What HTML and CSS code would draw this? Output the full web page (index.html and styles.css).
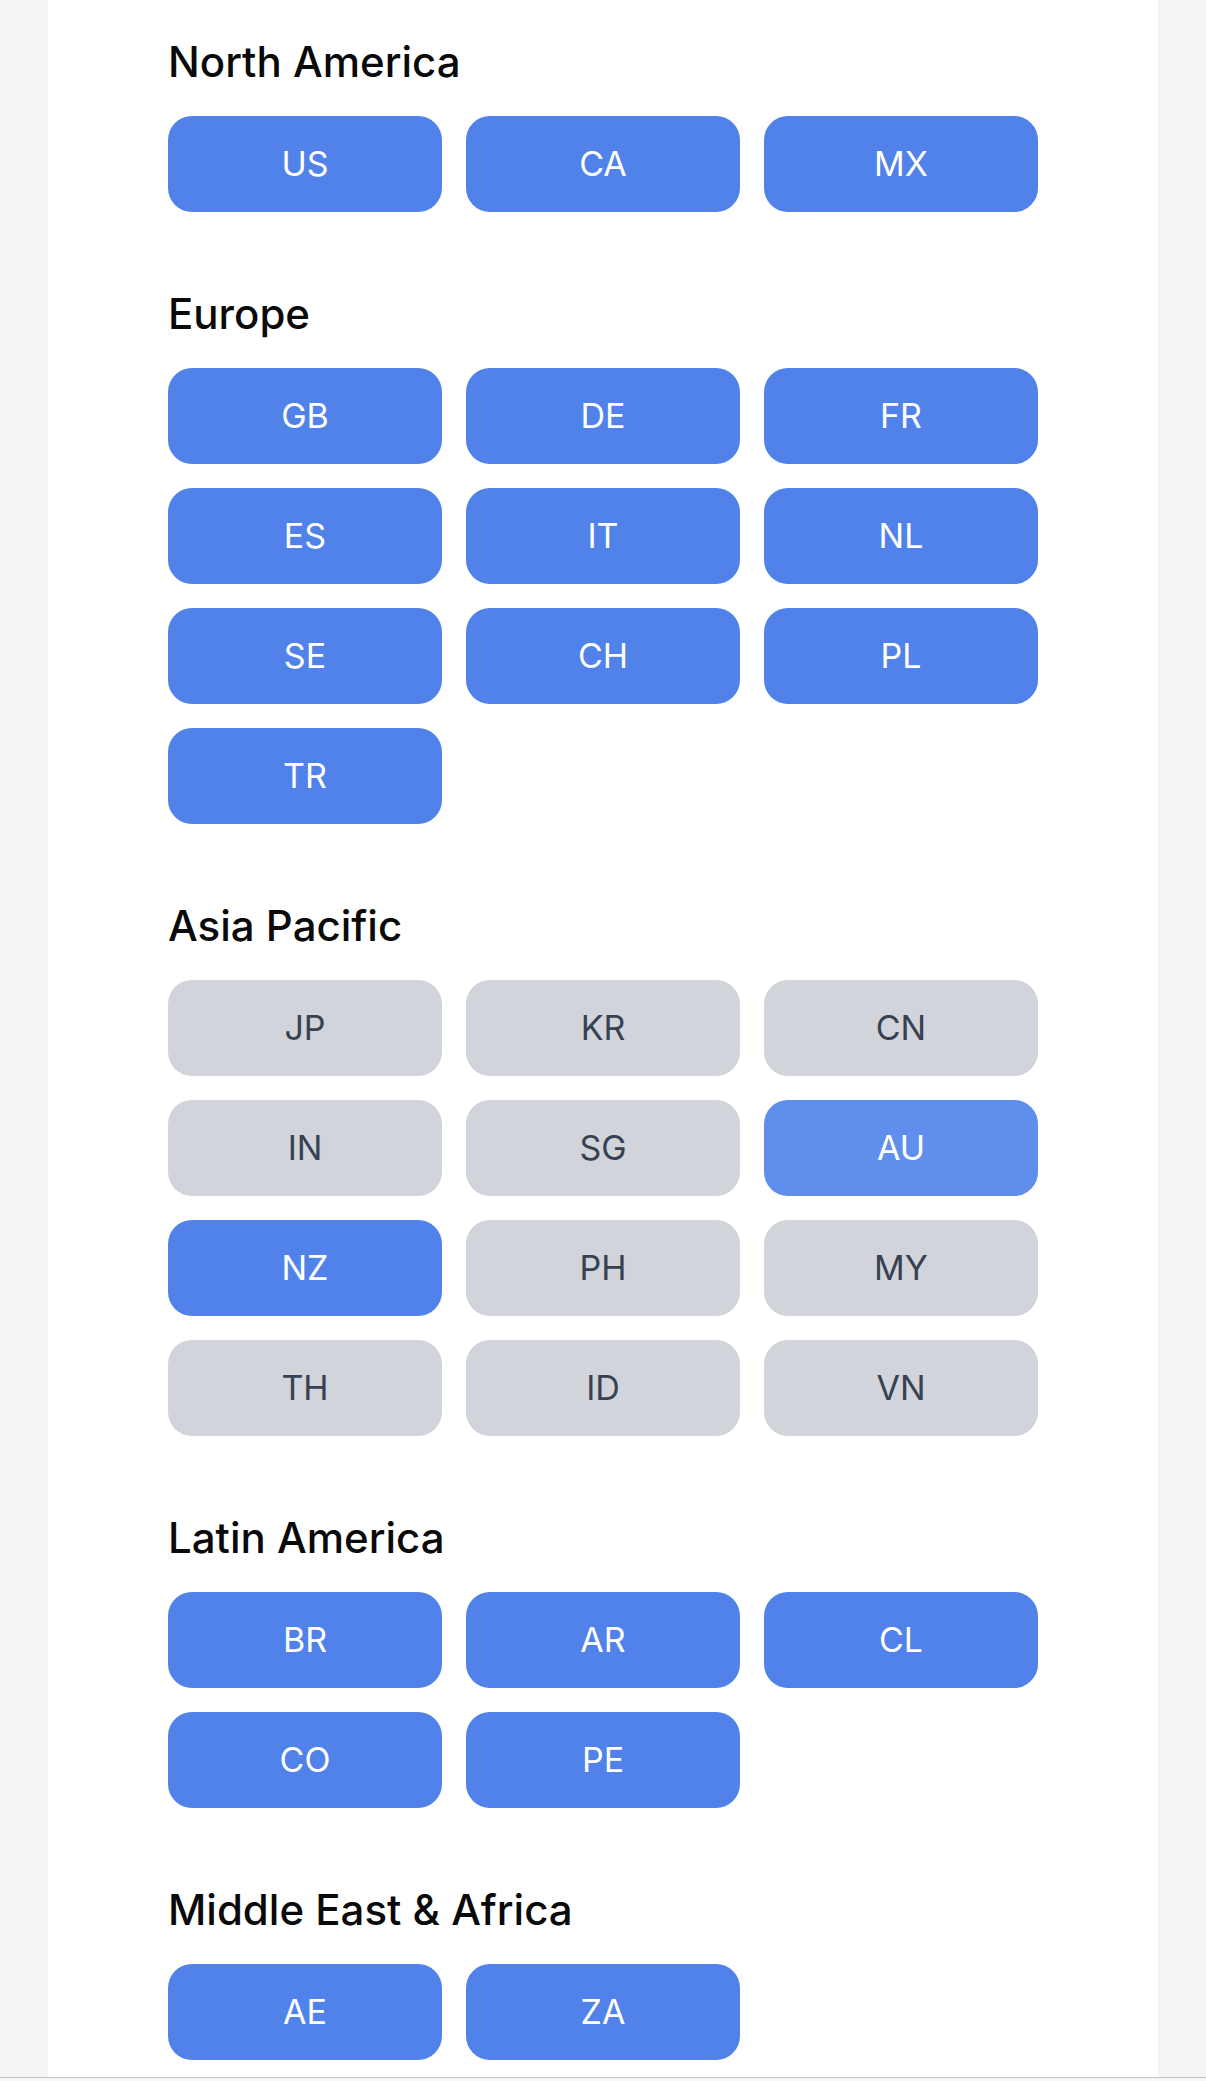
FILE: index.html
```html
<!DOCTYPE html>
<html lang="en">
<head>
<meta charset="utf-8">
<title>Regions</title>
<link rel="stylesheet" href="styles.css">
</head>
<body>
<main class="panel">
  <section class="region">
    <h2 class="region-title">North America</h2>
    <div class="chips">
      <button class="chip on">US</button>
      <button class="chip on">CA</button>
      <button class="chip on">MX</button>
    </div>
  </section>
  <section class="region">
    <h2 class="region-title">Europe</h2>
    <div class="chips">
      <button class="chip on">GB</button>
      <button class="chip on">DE</button>
      <button class="chip on">FR</button>
      <button class="chip on">ES</button>
      <button class="chip on">IT</button>
      <button class="chip on">NL</button>
      <button class="chip on">SE</button>
      <button class="chip on">CH</button>
      <button class="chip on">PL</button>
      <button class="chip on">TR</button>
    </div>
  </section>
  <section class="region">
    <h2 class="region-title">Asia Pacific</h2>
    <div class="chips">
      <button class="chip">JP</button>
      <button class="chip">KR</button>
      <button class="chip">CN</button>
      <button class="chip">IN</button>
      <button class="chip">SG</button>
      <button class="chip on hover">AU</button>
      <button class="chip on">NZ</button>
      <button class="chip">PH</button>
      <button class="chip">MY</button>
      <button class="chip">TH</button>
      <button class="chip">ID</button>
      <button class="chip">VN</button>
    </div>
  </section>
  <section class="region">
    <h2 class="region-title">Latin America</h2>
    <div class="chips">
      <button class="chip on">BR</button>
      <button class="chip on">AR</button>
      <button class="chip on">CL</button>
      <button class="chip on">CO</button>
      <button class="chip on">PE</button>
    </div>
  </section>
  <section class="region">
    <h2 class="region-title">Middle East &amp; Africa</h2>
    <div class="chips">
      <button class="chip on">AE</button>
      <button class="chip on">ZA</button>
    </div>
  </section>
</main>
<div class="bottom-edge"></div>
</body>
</html>
```

FILE: styles.css
```css
* { box-sizing: border-box; }

html, body {
  margin: 0;
  padding: 0;
}

body {
  background: #f3f4f6;
  font-family: Inter, "Noto Sans", "Liberation Sans", sans-serif;
  min-height: 2081px;
}

.panel {
  width: 1110px;
  margin: 0 48px;
  background: #ffffff;
  padding: 38px 120px 40px;
  min-height: 2081px;
}

.region {
  margin-bottom: 78px;
}

.region-title {
  margin: 0 0 30px;
  font-size: 42px;
  line-height: 48px;
  font-weight: 500;
  color: #0a0a0a;
  letter-spacing: 0;
}

.chips {
  display: grid;
  grid-template-columns: repeat(3, 274px);
  gap: 24px;
}

.chip {
  height: 96px;
  border: 0;
  border-radius: 24px;
  background: #d1d5db;
  color: #374151;
  font-family: inherit;
  font-size: 34px;
  font-weight: 400;
  padding: 0 0 2px;
  cursor: pointer;
}

.chip.on {
  background: #5082ea;
  color: #ffffff;
}

.chip.on.hover {
  background: #608eec;
}

.bottom-edge {
  position: fixed;
  left: 0;
  right: 0;
  bottom: 0;
  height: 4px;
  border-top: 1px solid #c4c4c4;
  background: #f7f7f7;
}
```
